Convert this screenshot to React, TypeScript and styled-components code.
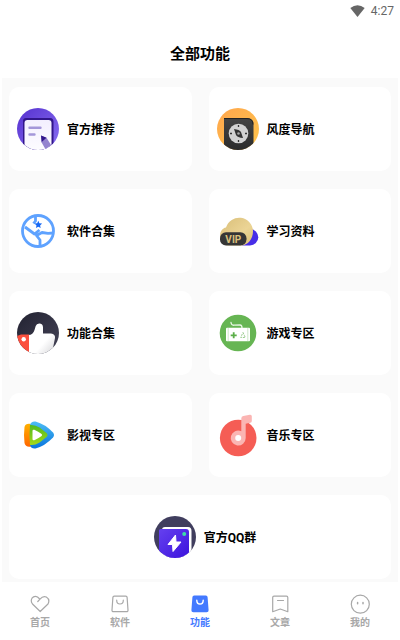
import React from "react";
import styled, { createGlobalStyle } from "styled-components";

const GlobalStyle = createGlobalStyle`
  * { box-sizing: border-box; }
  body {
    margin: 0;
    background: #fff;
    color: #000;
    font-family: Roboto, "Noto Sans CJK SC", sans-serif;
  }
  button { font: inherit; color: inherit; border: 0; cursor: pointer; }
`;

const Page = styled.div`
  min-height: 100vh;
  display: flex;
  flex-direction: column;
`;

const StatusBar = styled.div`
  height: 21px;
  padding: 0 6px;
  display: flex;
  align-items: center;
  justify-content: flex-end;
  gap: 6px;
  color: #666;
  font-size: 12px;
  font-weight: 400;
`;

const Header = styled.header`
  height: 57px;
  display: flex;
  align-items: center;
  justify-content: center;
  padding-top: 8px;
`;

const Title = styled.h1`
  margin: 0;
  font-size: 15px;
  line-height: 20px;
  font-weight: 700;
`;

const Content = styled.main`
  flex: 1;
  margin: 0 2px;
  padding: 9px 7px 3px;
  background: #fafafa;
  display: grid;
  grid-template-columns: 1fr 1fr;
  grid-auto-rows: 84px;
  gap: 18px 17px;
`;

const Card = styled.button<{ $wide?: boolean }>`
  display: flex;
  align-items: center;
  justify-content: ${(p) => (p.$wide ? "center" : "flex-start")};
  grid-column: ${(p) => (p.$wide ? "1 / -1" : "auto")};
  gap: 8px;
  padding: 0 0 0 ${(p) => (p.$wide ? "10px" : "8px")};
  border-radius: 10px;
  background: #fff;
  svg { width: 42px; height: 42px; flex: none; overflow: visible; }
`;

const CardLabel = styled.span`
  padding-top: 2px;
  font-size: 12px;
  line-height: 18px;
  font-weight: 700;
`;

const TabBar = styled.nav`
  height: 58px;
  display: grid;
  grid-template-columns: repeat(5, 1fr);
`;

const Tab = styled.button<{ $active?: boolean }>`
  display: flex;
  flex-direction: column;
  align-items: center;
  gap: 1px;
  padding: 12px 0 0;
  background: none;
  color: ${(p) => (p.$active ? "#4379ff" : "#a8a8a8")};
  svg { width: 20px; height: 20px; }
`;

const TabLabel = styled.span`
  font-size: 10px;
  line-height: 16px;
  font-weight: 700;
`;

const NoteIcon = () => (
  <svg viewBox="0 0 42 42" aria-hidden="true">
    <defs>
      <linearGradient id="noteBg" x1="0" y1="0" x2="1" y2="1">
        <stop offset="0" stopColor="#5530cf" />
        <stop offset="1" stopColor="#8a70f2" />
      </linearGradient>
      <linearGradient id="notePage" x1="0" y1="0" x2="0" y2="1">
        <stop offset="0" stopColor="#f3efff" />
        <stop offset="1" stopColor="#fdfcff" />
      </linearGradient>
      <clipPath id="noteClip"><circle cx="21" cy="21" r="21" /></clipPath>
    </defs>
    <g clipPath="url(#noteClip)">
      <rect width="42" height="42" fill="url(#noteBg)" />
      <path d="M6 42V13q0-3 3-3h24q3.500 0 3.500 4v28z" fill="#32168c" />
      <path d="M7.500 42V15q0-3 3-3h21q3 0 3 3v27z" fill="url(#notePage)" />
      <path d="M12.500 19.700h11M12.500 26.500h5" stroke="#a497da" strokeWidth="2.400" strokeLinecap="round" />
      <path d="M24 27.500l5.500 2.300 5 8-6 3.500-4-7z" fill="#9483cf" />
      <path d="M24 27.500l5.500 2.300-4.800 4.200z" fill="#32168c" />
    </g>
  </svg>
);

const CompassIcon = () => (
  <svg viewBox="0 0 42 42" aria-hidden="true">
    <defs>
      <linearGradient id="compassBg" x1="0" y1="0" x2="1" y2="1">
        <stop offset="0" stopColor="#ffa54c" />
        <stop offset="1" stopColor="#ffc64d" />
      </linearGradient>
      <linearGradient id="compassBody" x1="0" y1="0" x2="0" y2="1">
        <stop offset="0" stopColor="#444" />
        <stop offset="1" stopColor="#2c2c2c" />
      </linearGradient>
      <clipPath id="compassClip"><circle cx="21" cy="21" r="21" /></clipPath>
    </defs>
    <g clipPath="url(#compassClip)">
      <rect width="42" height="42" fill="url(#compassBg)" />
      <path d="M7 42V10h23q6.500 0 6.500 6.500V42z" fill="url(#compassBody)" />
      <path d="M7 10.500h23q6 0 6 6" fill="none" stroke="#222" />
      <circle cx="21.500" cy="25.500" r="9.800" fill="#d2d2d2" />
      <path d="M21.500 17v2M21.500 32v2M13 25.500h2M28 25.500h2" stroke="#333" strokeWidth="1.300" />
      <path d="M17 21q5.500.5 7 3l2 6q-5.500-.5-7-3z" fill="#333" />
      <circle cx="21.500" cy="25.500" r="1.300" fill="#aaa" />
    </g>
  </svg>
);

const GlobeIcon = () => (
  <svg viewBox="0 0 42 42" aria-hidden="true" fill="none">
    <circle cx="21" cy="21" r="15.500" stroke="#5ea2ff" strokeWidth="2.800" />
    <path d="M8 17l9.500 7 5-4M18.500 7v4l-2 2.500M36 23l-5 .3-6-.8-5.500 3 3.500 4.500v6" stroke="#5ea2ff" strokeWidth="2.800" strokeLinejoin="round" />
    <path d="M21.300 10.800l1.100 2.500 2.700.3-2 1.800.6 2.700-2.400-1.400-2.400 1.400.6-2.700-2-1.800 2.700-.3z" fill="#1769f5" />
  </svg>
);

const VipIcon = () => (
  <svg viewBox="0 0 42 42" aria-hidden="true">
    <defs>
      <linearGradient id="vipGold" x1="0" y1="0" x2="1" y2="1">
        <stop offset="0" stopColor="#d9be78" />
        <stop offset=".6" stopColor="#ebd495" />
        <stop offset="1" stopColor="#dcbf72" />
      </linearGradient>
    </defs>
    <path d="M33 19a8 8 0 010 16.500h-8z" fill="#472de8" />
    <path d="M11 35.500A8.500 8.500 0 013 26c0-4.500 2.500-8 6-8.500a13.800 13.800 0 0127 3.500c0 8-5 14.500-12 14.500z" fill="url(#vipGold)" />
    <rect x="3" y="22.300" width="26.500" height="13.200" rx="6" fill="#363636" />
    <text x="16.300" y="32.700" textAnchor="middle" fontFamily="Roboto, sans-serif" fontSize="10" fontWeight="700" fill="#dcc07c">VIP</text>
  </svg>
);

const ThumbIcon = () => (
  <svg viewBox="0 0 42 42" aria-hidden="true">
    <defs>
      <linearGradient id="thumbBg" x1="0" y1="0" x2="1" y2="1">
        <stop offset="0" stopColor="#222231" />
        <stop offset="1" stopColor="#454457" />
      </linearGradient>
      <linearGradient id="thumbHand" x1="0" y1="0" x2="1" y2="1">
        <stop offset=".6" stopColor="#fff" />
        <stop offset="1" stopColor="#d5d5d8" />
      </linearGradient>
      <clipPath id="thumbClip"><circle cx="21" cy="21" r="21" /></clipPath>
    </defs>
    <g clipPath="url(#thumbClip)">
      <rect width="42" height="42" fill="url(#thumbBg)" />
      <path d="M11.500 23q4.500 0 6-5l1.200-4q.8-2.500 3.500-2.500 3.800 0 3.800 4v6h8q4.500.5 4 4.500l-2 10q-.5 3-3 6H11.500z" fill="url(#thumbHand)" />
      <path d="M0 42V24l4-1.500h8V42z" fill="#fb503e" />
      <circle cx="6.700" cy="27.300" r="2.200" fill="#fff" />
    </g>
  </svg>
);

const GameIcon = () => (
  <svg viewBox="0 0 42 42" aria-hidden="true">
    <circle cx="21" cy="21" r="18.300" fill="#66b553" />
    <path d="M14 10.500q.5 3 3 2.700l6-.2q2 0 2 3" fill="none" stroke="#e8f6e4" strokeWidth="1.300" strokeLinecap="round" />
    <rect x="9" y="15.700" width="24" height="13.600" rx="1" fill="#fff" />
    <path d="M11.200 16v13M30.800 16v13" stroke="#b9deb1" strokeWidth=".7" />
    <path d="M16.700 20.300v6M13.700 23.300h6" stroke="#5bae48" strokeWidth="1.800" />
    <path d="M26 20.500l2.300 5h-4.600z" fill="none" stroke="#9bcd90" strokeWidth="1" strokeDasharray="2 1" />
  </svg>
);

const PlayIcon = () => (
  <svg viewBox="0 0 42 42" aria-hidden="true">
    <defs>
      <linearGradient id="playBlue" x1="0" y1="0" x2="0" y2="1">
        <stop offset="0" stopColor="#4dbdf5" />
        <stop offset="1" stopColor="#0874dc" />
      </linearGradient>
      <linearGradient id="playOrange" x1="0" y1="0" x2="0" y2="1">
        <stop offset="0" stopColor="#ffb100" />
        <stop offset="1" stopColor="#ff6600" />
      </linearGradient>
      <linearGradient id="playGreen" x1="0" y1="0" x2="0" y2="1">
        <stop offset="0" stopColor="#4fba20" />
        <stop offset="1" stopColor="#a5d918" />
      </linearGradient>
    </defs>
    <path d="M14 10q-5.500-1-6.500 3-1 8 0 16 1 4.500 6.500 3.500z" fill="url(#playOrange)" />
    <path d="M13 11q1-4 5.500-3.500Q28 10 36 18.500q2 2.500 0 5Q28 32 18.500 34.500 14 35 13 31z" fill="url(#playBlue)" />
    <path d="M13 11q5-.5 9.500 2.500l7 5.500q2 2 0 4l-7 5.500Q18 31.500 13 31q-1-10 0-20z" fill="url(#playGreen)" />
    <path d="M15.500 17q0-1.800 1.800-1.200 4 1.700 7.300 4.200 1 1 0 2-3.300 2.500-7.300 4.200-1.800.6-1.800-1.200z" fill="#fff" />
  </svg>
);

const MusicIcon = () => (
  <svg viewBox="0 0 42 42" aria-hidden="true">
    <circle cx="21.200" cy="24" r="18.300" fill="#f55d55" />
    <path d="M24.300 4.500q0-2 2-2.400l6.500-1.400q2-.3 2 1.500V7q0 1.500-1.500 1.800l-4.600 1V24a7.500 7.500 0 11-4.400-6.800z" fill="#fbb5b3" />
    <circle cx="21.200" cy="24" r="3" fill="#fff" />
  </svg>
);

const BookIcon = () => (
  <svg viewBox="0 0 42 42" aria-hidden="true">
    <defs>
      <linearGradient id="bookCover" x1="0" y1="0" x2="1" y2="1">
        <stop offset="0" stopColor="#6540ef" />
        <stop offset="1" stopColor="#3c13dd" />
      </linearGradient>
      <clipPath id="bookClip"><circle cx="21" cy="21" r="21" /></clipPath>
    </defs>
    <g clipPath="url(#bookClip)">
      <rect width="42" height="42" fill="#403e5e" />
      <path d="M8 14q0-3 3-3h23q3.500 0 3.500 4v27H8z" fill="#fff" />
      <path d="M5 42V14.500q0-1.500 2-1.500h25q3 0 3 3v26z" fill="url(#bookCover)" />
      <path d="M21.500 19L14 28.500h4.500l.5 7 8-9.500h-5z" fill="#fff" stroke="#fff" strokeWidth="1" strokeLinejoin="round" />
      <circle cx="30.200" cy="18" r="2" fill="#3ddca8" />
    </g>
  </svg>
);

const line = { fill: "none", stroke: "currentColor", strokeWidth: 1.2, strokeLinecap: "round", strokeLinejoin: "round" } as const;

const HeartTab = () => (
  <svg viewBox="0 0 20 20" aria-hidden="true" {...line}>
    <path d="M10.200 17.500L2.500 10Q.3 7 2 4.200 4.200 1.500 7.500 3L10 5.200q3-3.700 6.300-2.200 4 2.500 1.700 7zM10 5.200L7.800 7.500" />
  </svg>
);
const BagTab = () => (
  <svg viewBox="0 0 20 20" aria-hidden="true" {...line}>
    <path d="M4.200 2.200h11.600q1.200 0 1.300 1.200L18 16q.1 1.700-1.500 1.700h-13Q1.900 17.700 2 16l.9-12.600q.1-1.200 1.300-1.200zM6.700 6.200q0 3.800 3.300 3.800t3.300-3.800" />
  </svg>
);
const BagFilledTab = () => (
  <svg viewBox="0 0 20 20" aria-hidden="true">
    <path d="M4.200 1.500h11.600q1.700 0 1.800 1.700l1 13q.1 2.100-2 2.100H3.400q-2.100 0-2-2.100l1-13q.1-1.700 1.800-1.700z" fill="#4379ff" />
    <path d="M6.800 6.200q0 3.800 3.200 3.800t3.200-3.800" fill="none" stroke="#fff" strokeWidth="1.400" strokeLinecap="round" />
  </svg>
);
const BookmarkTab = () => (
  <svg viewBox="0 0 20 20" aria-hidden="true" {...line}>
    <path d="M4 2.200h12.500q1.300 0 1.300 1.300v14.200L10.300 15l-7.600 2.700V3.500q0-1.300 1.300-1.300zM7.500 6.500h6" />
  </svg>
);
const FaceTab = () => (
  <svg viewBox="0 0 20 20" aria-hidden="true" {...line}>
    <circle cx="10.300" cy="10.200" r="9" />
    <path d="M7.600 8.500v1.200M13 8.500v1.200" strokeWidth="1.500" />
  </svg>
);

const features = [
  { label: "官方推荐", Icon: NoteIcon },
  { label: "风度导航", Icon: CompassIcon },
  { label: "软件合集", Icon: GlobeIcon },
  { label: "学习资料", Icon: VipIcon },
  { label: "功能合集", Icon: ThumbIcon },
  { label: "游戏专区", Icon: GameIcon },
  { label: "影视专区", Icon: PlayIcon },
  { label: "音乐专区", Icon: MusicIcon },
  { label: "官方QQ群", Icon: BookIcon, wide: true },
];

const tabs = [
  { label: "首页", Icon: HeartTab },
  { label: "软件", Icon: BagTab },
  { label: "功能", Icon: BagFilledTab, active: true },
  { label: "文章", Icon: BookmarkTab },
  { label: "我的", Icon: FaceTab },
];

export default function App() {
  return (
    <Page>
      <GlobalStyle />
      <StatusBar>
        <svg width="15" height="12" viewBox="0 0 15 12" aria-hidden="true">
          <path d="M.3 3Q7.500-2.500 14.700 3L7.500 12z" fill="#666" />
        </svg>
        <span>4:27</span>
      </StatusBar>
      <Header>
        <Title>全部功能</Title>
      </Header>
      <Content>
        {features.map(({ label, Icon, wide }) => (
          <Card key={label} type="button" $wide={wide}>
            <Icon />
            <CardLabel>{label}</CardLabel>
          </Card>
        ))}
      </Content>
      <TabBar>
        {tabs.map(({ label, Icon, active }) => (
          <Tab key={label} type="button" $active={active} aria-current={active ? "page" : undefined}>
            <Icon />
            <TabLabel>{label}</TabLabel>
          </Tab>
        ))}
      </TabBar>
    </Page>
  );
}
